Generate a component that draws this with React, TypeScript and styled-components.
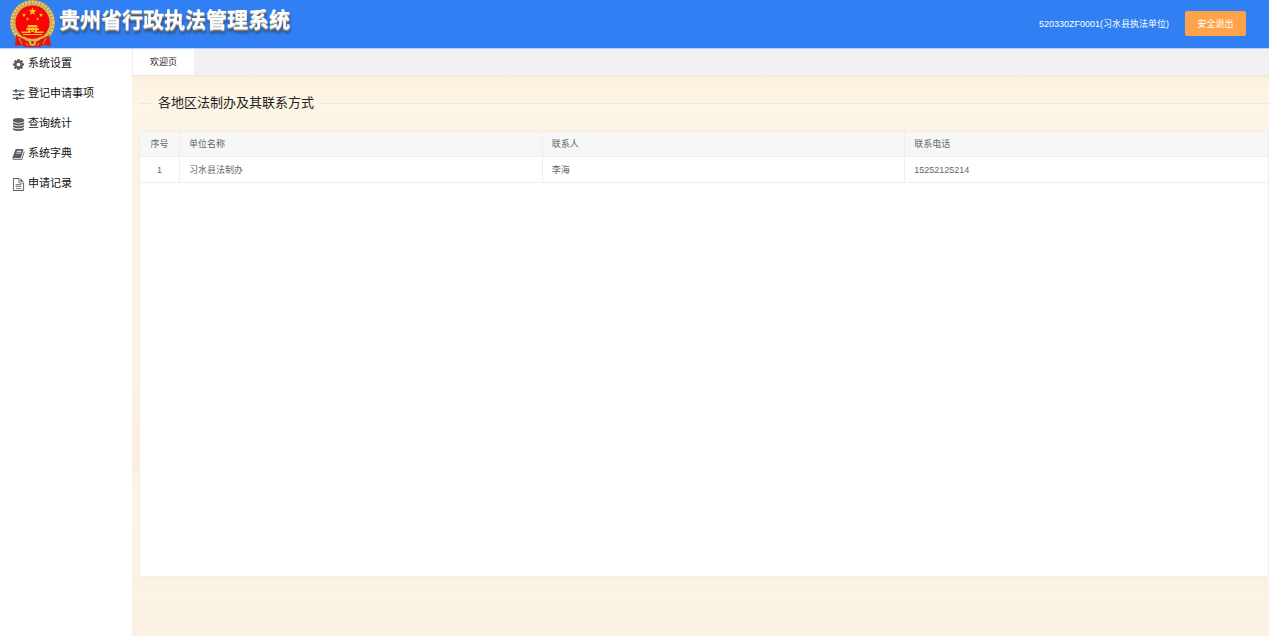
import React from "react";
import styled, { createGlobalStyle } from "styled-components";

const GlobalStyle = createGlobalStyle`
  * { box-sizing: border-box; }
  body {
    margin: 0;
    background: #fff;
    color: #222;
    font-family: "Liberation Sans", "Noto Sans CJK SC", sans-serif;
    font-size: 11px;
  }
`;

const Page = styled.div`
  display: flex;
  flex-direction: column;
  min-height: 100vh;
`;

const Header = styled.header`
  display: flex;
  align-items: center;
  height: 49px;
  padding: 0 23px 1px 9px;
  background: #307ff3;
  border-bottom: 1px solid #b9d3fb;
`;

const Brand = styled.h1`
  flex: 1;
  margin: 0 0 8px 3px;
  color: #fff;
  font-size: 21px;
  line-height: 32px;
  font-weight: 700;
  text-shadow: 0 1px 0 #c4c8cc, 0 2px 0 #75797e, 0 3px 1px #565c66, 1px 4px 3px rgba(0, 0, 0, 0.4);
`;

const Account = styled.span`
  margin-right: 16px;
  color: #fff;
  font-size: 9px;
  line-height: 16px;
`;

const LogoutButton = styled.button`
  width: 61px;
  height: 25px;
  padding: 0;
  border: 0;
  border-radius: 2px;
  background: #ffa34a;
  color: #fff;
  font-family: inherit;
  font-size: 9px;
`;

const Body = styled.div`
  display: flex;
  flex: 1;
`;

const Sidebar = styled.nav`
  width: 132px;
  flex: none;
`;

const MenuLink = styled.a`
  display: flex;
  align-items: center;
  gap: 3px;
  height: 30px;
  padding: 0 0 4px 12px;
  color: #111;
  font-size: 11px;
  text-decoration: none;
  svg { flex: none; margin-top: 4px; }
`;

const Main = styled.main`
  display: flex;
  flex: 1;
  flex-direction: column;
  min-width: 0;
`;

const TabBar = styled.div`
  display: flex;
  height: 27px;
  background: #f1f1f1;
  border-bottom: 1px solid #ebe7df;
`;

const Tab = styled.button`
  width: 62px;
  padding: 0 0 2px;
  border: 0;
  border-left: 1px solid #eee;
  background: #fff;
  color: #222;
  font-family: inherit;
  font-size: 9px;
`;

const Content = styled.div`
  display: flex;
  flex: 1;
  flex-direction: column;
  padding: 18px 0 59px 7px;
  background:
    linear-gradient(#faf3e0, #fbf4e3 18px, #fbf2e6 24px, #fbf2e5) bottom / 100% 59px no-repeat,
    linear-gradient(#f9efda 0, #fcf2e0 4px, #fcf4e5 26px, #fdf6e4 27px, #fdf6e4 38px, #fcf2e7 54px, #fdf4e3 130px, #fdf4e6 260px, #fdeee1 395px, #f3ead6 396px, #fbf4e2 397px) top / 100% 397px no-repeat,
    linear-gradient(#fbf5e3 397px, #fcf6e5 440px, #fcf2e7 500px);
`;

const Section = styled.fieldset`
  margin: 0;
  padding: 0;
  border: 0;
  border-top: 1px solid #ebe9e3;
`;

const SectionTitle = styled.legend`
  margin-left: 13px;
  padding: 0 6px;
  color: #222;
  font-size: 13px;
  line-height: 18px;
`;

const TableBox = styled.div`
  flex: 1;
  margin-top: 19px;
  background: #fff;
  border: 1px solid #eee;
`;

const Table = styled.table`
  width: 100%;
  border-collapse: separate;
  border-spacing: 0;
  table-layout: fixed;
  color: #666;
  font-size: 9px;
  line-height: 16px;

  th, td {
    height: 26px;
    padding: 0 9px;
    border-bottom: 1px solid #eee;
    border-right: 1px solid #eee;
    font-weight: 400;
    text-align: left;
  }
  th { height: 25px; background: #f7f7f7; }
  th:first-child, td:first-child { width: 40px; padding: 0; text-align: center; }
  th:last-child, td:last-child { border-right: 0; }
`;

function star(cx: number, cy: number, r: number) {
  return Array.from({ length: 10 }, (_, i) => {
    const a = (Math.PI * i) / 5 - Math.PI / 2;
    const d = i % 2 ? r * 0.42 : r;
    return `${(cx + d * Math.cos(a)).toFixed(2)},${(cy + d * Math.sin(a)).toFixed(2)}`;
  }).join(" ");
}

const Emblem = () => (
  <svg width="47" height="48" viewBox="0 0 47 48" role="img" aria-label="国徽">
    <circle cx="23.5" cy="22.5" r="19.5" fill="none" stroke="#c39a45" strokeWidth="6" />
    <circle cx="23.5" cy="22.5" r="20.5" fill="none" stroke="#e2cb80" strokeWidth="3" strokeDasharray="2 1.4" />
    <circle cx="23.5" cy="22.5" r="18" fill="none" stroke="#d8b95f" strokeWidth="1.5" strokeDasharray="3 1" />
    <circle cx="23.5" cy="22.5" r="17" fill="#f90505" />
    <path d="M7 35 Q14 40 19 39 L23.5 37 L28 39 Q33 40 40 35 L42 46 L34 45 L31 47 L16 47 L13 45 L6 46Z" fill="#e5170c" />
    <path d="M14 36 Q23.5 42 33 36 L31 40 Q23.5 44 16 40Z" fill="#d9b34d" />
    <circle cx="23.5" cy="42.5" r="3.5" fill="#d9b34d" />
    <circle cx="23.5" cy="42.5" r="1.4" fill="#e5170c" />
    <path d="M10 38 L13 44 M37 38 L34 44 M17 43 L19 46 M30 43 L28 46" stroke="#d9a33d" />
    <g fill="#ffc421">
      <polygon points={star(23.5, 11.5, 4.2)} />
      <polygon points={star(15, 15, 2.2)} />
      <polygon points={star(32, 15, 2.2)} />
      <polygon points={star(18.5, 19, 1.8)} />
      <polygon points={star(28.5, 19, 1.8)} />
      <path d="M18.5 26 L19.5 25H27.5L28.5 26V27H18.5Z M17 29 L18.5 27.5H28.5L30 29V30H17Z M19 30h2v2h-2Z M22.5 30h2v2h-2Z M26 30h2v2h-2Z M12.5 31.5h22v1.5h-9v-1h-4v1h-9Z M14 34h19v1H14Z" />
    </g>
  </svg>
);

const ICONS = {
  cog: "M1152 896q0-106-75-181t-181-75-181 75-75 181 75 181 181 75 181-75 75-181zm512-109v222q0 12-8 23t-20 13l-185 28q-19 54-39 91 35 50 107 138 10 12 10 25t-9 23q-27 37-99 108t-94 71q-12 0-26-9l-138-108q-44 23-91 38-16 136-29 186-7 28-36 28h-222q-14 0-24.5-8.5t-11.5-21.5l-28-184q-49-16-90-37l-141 107q-10 9-25 9-14 0-25-11-126-114-165-168-7-10-7-23 0-12 8-23 15-21 51-66.5t54-70.5q-27-50-41-99l-183-27q-13-2-21-12.5t-8-23.5v-222q0-12 8-23t19-13l186-28q14-46 39-92-40-57-107-138-10-12-10-24 0-10 9-23 26-36 98.5-107.5t94.5-71.5q13 0 26 10l138 107q44-23 91-38 16-136 29-186 7-28 36-28h222q14 0 24.5 8.5t11.5 21.5l28 184q49 16 90 37l142-107q9-9 24-9 13 0 25 10 129 119 165 170 7 8 7 22 0 12-8 23-15 21-51 66.5t-54 70.5q26 50 41 98l183 28q13 2 21 12.5t8 23.5z",
  sliders: "M100 320h320v-140h280v140h1000v150H700v140H420V470H100zM100 840h860V700h280v140h460v150h-460v140H960V990H100zM100 1360h460v-140h280v140h860v150H840v140H560v-140H100z",
  database: "M896 768q237 0 443-43t325-127v170q0 69-103 128t-280 93.5-385 34.5-385-34.5-280-93.5-103-128v-170q119 84 325 127t443 43zm0 768q237 0 443-43t325-127v170q0 69-103 128t-280 93.5-385 34.5-385-34.5-280-93.5-103-128v-170q119 84 325 127t443 43zm0-384q237 0 443-43t325-127v170q0 69-103 128t-280 93.5-385 34.5-385-34.5-280-93.5-103-128v-170q119 84 325 127t443 43zm0-1152q208 0 385 34.5t280 93.5 103 128v128q0 69-103 128t-280 93.5-385 34.5-385-34.5-280-93.5-103-128v-128q0-69 103-128t280-93.5 385-34.5z",
  book: "M1703 478q40 57 18 129l-275 906q-19 64-76.5 107.5t-122.5 43.5h-923q-77 0-148.5-53.5t-99.5-131.5q-24-67-2-127 0-4 3-27t4-37q1-8-3-21.5t-3-19.5q2-11 8-21t16.5-23.5 16.5-23.5q23-38 45-91.5t30-91.5q3-10 .5-30t-.5-28q3-11 17-28t17-23q21-36 42-92t25-90q1-9-2.5-32t.5-28q4-13 22-30.5t22-22.5q19-26 42.5-84.5t27.5-96.5q1-8-3-25.5t-2-26.5q2-8 9-18t18-23 17-21q8-12 16.5-30.5t15-35 16-36 19.5-32 26.5-23.5 36-11.5 47.5 5.5l-1 3q38-9 51-9h761q74 0 114 56t18 130l-274 906q-36 119-71.5 153.5t-128.5 34.5h-869q-27 0-38 15-11 16-1 43 24 70 144 70h923q29 0 56-15.5t35-41.5l300-987q7-22 5-57 38 15 59 43zm-1064 2q-4 13 2 22.5t20 9.5h608q13 0 25.5-9.5t16.5-22.5l21-64q4-13-2-22.5t-20-9.5h-608q-13 0-25.5 9.5t-16.5 22.5zm-83 256q-4 13 2 22.5t20 9.5h608q13 0 25.5-9.5t16.5-22.5l21-64q4-13-2-22.5t-20-9.5h-608q-13 0-25.5 9.5t-16.5 22.5z",
  file: "M1596 476q14 14 28 36h-472V40q22 14 36 28zM1120 640h544v1056q0 40-28 68t-68 28H224q-40 0-68-28t-28-68V96q0-40 28-68t68-28h800v544q0 40 28 68t68 28zM256 128v1536h1280V768h-416q-93 0-158-66t-66-158V128zM512 864h768v120H512zM512 1120h768v120H512zM512 1376h768v120H512z",
};

const Icon = ({ name }: { name: keyof typeof ICONS }) => (
  <svg width="13" height="13" viewBox="0 0 1792 1792" fill="#5c5c5c" fillRule={name === "file" ? "evenodd" : "nonzero"} aria-hidden="true">
    <path d={ICONS[name]} />
  </svg>
);

const MENU: { icon: keyof typeof ICONS; label: string }[] = [
  { icon: "cog", label: "系统设置" },
  { icon: "sliders", label: "登记申请事项" },
  { icon: "database", label: "查询统计" },
  { icon: "book", label: "系统字典" },
  { icon: "file", label: "申请记录" },
];

const CONTACTS = [{ unit: "习水县法制办", person: "李海", phone: "15252125214" }];

export default function App() {
  return (
    <Page lang="zh-CN">
      <GlobalStyle />
      <Header>
        <Emblem />
        <Brand>贵州省行政执法管理系统</Brand>
        <Account>520330ZF0001(习水县执法单位)</Account>
        <LogoutButton type="button">安全退出</LogoutButton>
      </Header>
      <Body>
        <Sidebar>
          {MENU.map((item) => (
            <MenuLink key={item.label} href="#">
              <Icon name={item.icon} />
              {item.label}
            </MenuLink>
          ))}
        </Sidebar>
        <Main>
          <TabBar role="tablist">
            <Tab type="button" role="tab" aria-selected="true">欢迎页</Tab>
          </TabBar>
          <Content>
            <Section>
              <SectionTitle>各地区法制办及其联系方式</SectionTitle>
            </Section>
            <TableBox>
              <Table>
                <thead>
                  <tr>
                    <th scope="col">序号</th>
                    <th scope="col">单位名称</th>
                    <th scope="col">联系人</th>
                    <th scope="col">联系电话</th>
                  </tr>
                </thead>
                <tbody>
                  {CONTACTS.map((row, i) => (
                    <tr key={row.phone}>
                      <td>{i + 1}</td>
                      <td>{row.unit}</td>
                      <td>{row.person}</td>
                      <td>{row.phone}</td>
                    </tr>
                  ))}
                </tbody>
              </Table>
            </TableBox>
          </Content>
        </Main>
      </Body>
    </Page>
  );
}
